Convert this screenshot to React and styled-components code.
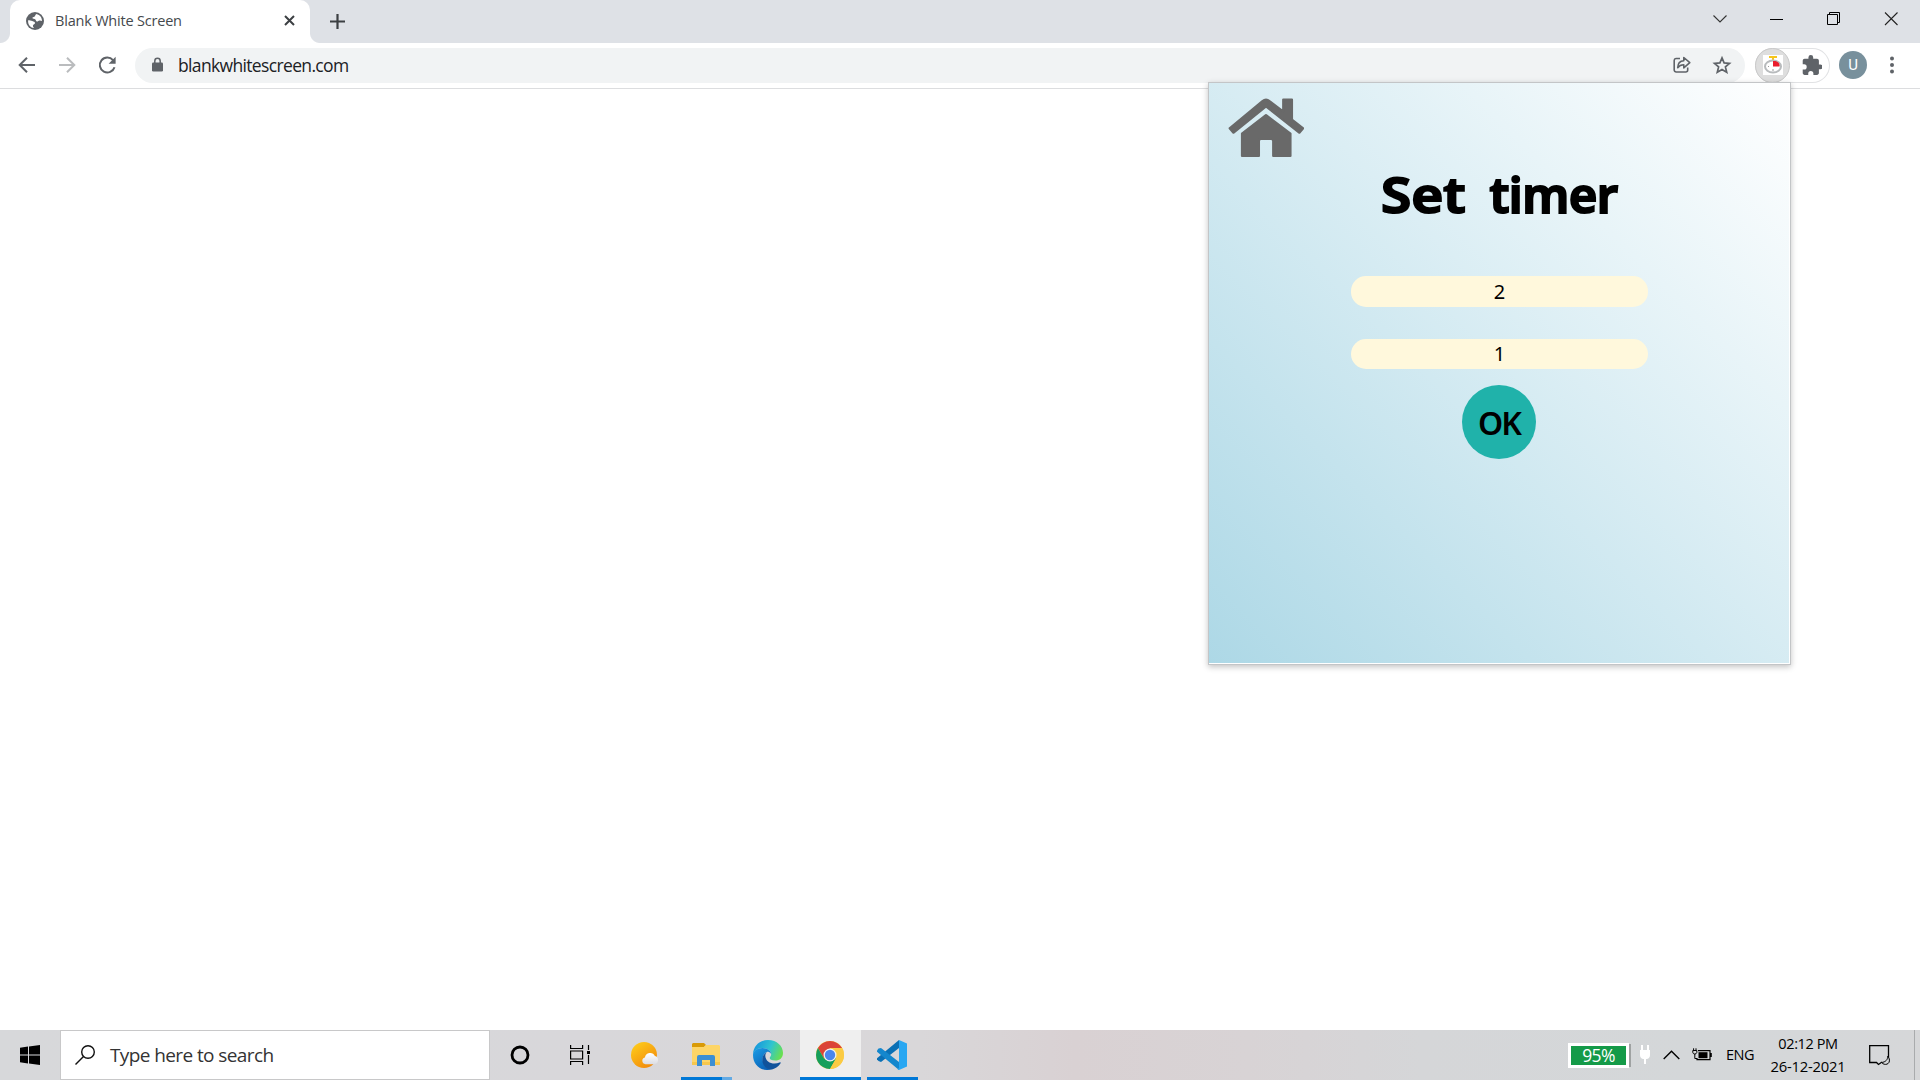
import React from 'react';
import styled, { createGlobalStyle } from 'styled-components';

const Global = createGlobalStyle`
  * { box-sizing: border-box; }
  html, body { margin: 0; background: #fff; overflow: hidden; }
  body { font-family: "Open Sans", "Noto Sans", sans-serif; }
  svg { display: block; flex: none; }
`;

const Screen = styled.div`
  position: relative;
  width: 1920px;
  height: 1080px;
  display: flex;
  flex-direction: column;
  background: #fff;
`;

const TabStrip = styled.header`
  height: 43px;
  flex: none;
  display: flex;
  padding-left: 10px;
  background: #dee1e6;
`;

const Tab = styled.div`
  position: relative;
  width: 300px;
  height: 43px;
  display: flex;
  align-items: center;
  padding: 0 15px 2px 16px;
  border-radius: 10px 10px 0 0;
  background: #fff;
  &::before, &::after {
    content: "";
    position: absolute;
    bottom: 0;
    width: 10px;
    height: 10px;
  }
  &::before { left: -10px; background: radial-gradient(circle at 0 0, transparent 9.5px, #fff 10.5px); }
  &::after { right: -10px; background: radial-gradient(circle at 100% 0, transparent 9.5px, #fff 10.5px); }
`;

const Label = styled.span`
  font-size: ${p => p.$size}px;
  line-height: ${p => p.$line || 20}px;
  letter-spacing: ${p => p.$track || 0}px;
  color: ${p => p.$color || '#000'};
  white-space: nowrap;
`;

const TabTitle = styled(Label)`
  flex: 1;
  margin-left: 11px;
`;

const NewTab = styled.div`
  display: flex;
  align-items: center;
  margin-left: 20px;
  padding-bottom: 1px;
`;

const WindowButtons = styled.div`
  display: flex;
  align-items: center;
  gap: 43px;
  height: 37px;
  margin-left: auto;
  padding-right: 22px;
`;

const Toolbar = styled.nav`
  height: 46px;
  flex: none;
  display: flex;
  align-items: center;
  padding: 0 18px 1px 17px;
  border-bottom: 1px solid #dcdddf;
`;

const NavButtons = styled.div`
  display: flex;
  gap: 20px;
  width: 118px;
`;

const Omnibox = styled.div`
  width: 1610px;
  height: 35px;
  display: flex;
  align-items: center;
  padding: 0 13px 0 16px;
  border-radius: 18px;
  background: #f1f3f4;
`;

const Url = styled(Label)`
  flex: 1;
  margin-left: 14px;
`;

const OmniActions = styled.div`
  display: flex;
  gap: 20px;
`;

const Extensions = styled.div`
  width: 75px;
  height: 35px;
  display: flex;
  align-items: center;
  gap: 12px;
  margin-left: 10px;
  border-radius: 18px;
  box-shadow: inset 0 0 0 1px #e1e2e4;
`;

const ActiveExtension = styled.div`
  width: 35px;
  height: 35px;
  display: grid;
  place-items: center;
  border-radius: 50%;
  border: 1px solid #c9c9c9;
  background: #dedede;
`;

const Avatar = styled.div`
  width: 28px;
  height: 28px;
  display: grid;
  place-items: center;
  margin-left: 9px;
  border-radius: 50%;
  background: #78909c;
  color: #fff;
  font: 15px/28px Roboto, sans-serif;
`;

const MenuDots = styled.div`
  display: flex;
  margin-left: 23px;
`;

const Page = styled.main`
  flex: 1;
`;

const Popup = styled.section`
  position: absolute;
  left: 1208px;
  top: 82px;
  width: 583px;
  height: 583px;
  display: flex;
  flex-direction: column;
  align-items: center;
  border: 1px solid #c3c5c7;
  background: linear-gradient(45deg, #add8e6, #fff) 0 0 / 580px 580px no-repeat #fff;
  box-shadow: 0 2px 6px rgba(0, 0, 0, 0.24);
`;

const HomeButton = styled.div`
  align-self: flex-start;
  padding: 15px 0 0 19px;
  height: 76px;
`;

const Title = styled.h1`
  height: 60px;
  display: flex;
  gap: 19px;
  margin: 0 0 57px;
  font: 600 49px/70px "Noto Sans", sans-serif;
  -webkit-text-stroke: 2px #000;
  white-space: nowrap;
`;

const Word = styled.span`
  letter-spacing: ${p => p.$track}px;
  margin-right: ${p => p.$after || 0}px;
  transform: scaleX(${p => p.$stretch || 1});
  transform-origin: left;
`;

const Field = styled.div`
  width: 297px;
  height: ${p => p.$height}px;
  margin-bottom: ${p => p.$gap}px;
  border-radius: 15px;
  background: #fff8dc;
  text-align: center;
  font: 20px/${p => p.$height}px "Noto Sans", sans-serif;
`;

const OkButton = styled.div`
  width: 74px;
  height: 74px;
  margin-right: 1px;
  border-radius: 50%;
  background: #20b2aa;
  text-align: center;
  font: 600 32px/75px "Noto Sans", sans-serif;
  letter-spacing: -2px;
`;

const Taskbar = styled.footer`
  height: 50px;
  flex: none;
  display: flex;
  background: linear-gradient(90deg, #d7d8da 0%, #d8d7da 30%, #d9d7d9 48%, #d9d1d3 56%, #d8d3d5 65%, #d5d6d8 74%, #d4d7d9 88%, #d6d7d9 100%);
`;

const Start = styled.div`
  width: 60px;
  display: grid;
  place-items: center;
`;

const SearchBox = styled.div`
  width: 430px;
  display: flex;
  align-items: center;
  gap: 15px;
  padding-left: 14px;
  border: 1px solid #c8c8c9;
  background: #fff;
`;

const Task = styled.div`
  width: ${p => p.$width}px;
  margin-right: ${p => p.$gap || 0}px;
  padding-right: ${p => p.$nudge || 0}px;
  display: flex;
  align-items: center;
  justify-content: center;
  background: ${p => (p.$active ? '#efefef' : 'transparent')};
  box-shadow: ${p => (p.$open ? 'inset 0 -3px 0 #0078d7' : 'none')};
  border-right: ${p => (p.$stacked ? '10px solid transparent' : '0')};
  border-image: ${p => (p.$stacked ? 'linear-gradient(transparent 47px, #63aae4 47px) 0 10 0 0' : 'none')};
`;

const Tray = styled.div`
  display: flex;
  align-items: center;
  margin-left: auto;
`;

const Battery = styled.div`
  width: 61px;
  height: 25px;
  margin-right: 10px;
  border: 3px solid #fff;
  background: #149a48;
  text-align: center;
  line-height: 18px;
  box-shadow: 3px 0 0 -1px #9fa2a2;
`;

const Clock = styled.div`
  width: 78px;
  display: flex;
  flex-direction: column;
  align-items: center;
  margin: 0 22px 0 15px;
`;

const Spacer = styled.div`
  width: ${p => p.$w}px;
`;

const ShowDesktop = styled.div`
  width: 6px;
  height: 50px;
  margin-left: 24px;
  border-left: 1px solid #a9abad;
`;

const Globe = () => (
  <svg width="18" height="18" viewBox="0 0 18 18">
    <circle cx="9" cy="9" r="9" fill="#5f6368" />
    <path d="M10.5 1.9C9.2 2.3 9.5 4 8.4 4.7c-1 .5-2 .2-2 1.4 0 1 2.2.6 3 1.5.8 1 .3 1.8 1.6 2 1 .1 1.5-1.3 2.8-1.1.9.1 1.8.4 2.2.5.1-3.4-2-6.2-5.5-7.1zM2.1 8.2c1.4.2 3 .1 4.2.9 1.3.8 2.8.8 2.7 2.1-.1 1-1.8 1-2 2-.2.9.2 2 1 2.7C4.8 16 2.100 13 2.100 9.500z" fill="#fff" />
  </svg>
);

const Cross = () => (
  <svg width="11" height="11" viewBox="0 0 11 11"><path d="M1 1l9 9M10 1l-9 9" stroke="#3c4043" strokeWidth="2" /></svg>
);

const Plus = () => (
  <svg width="15" height="15" viewBox="0 0 15 15"><path d="M7.500 0v15M0 7.500h15" stroke="#3c4043" strokeWidth="2.200" /></svg>
);

const Arrow = ({ color, flip }) => (
  <svg width="20" height="20" viewBox="0 0 20 20">
    <path transform={flip ? 'translate(20 0) scale(-1 1)' : undefined} d="M18 10H3.500M10 2.700L2.700 10l7.300 7.300" fill="none" stroke={color} strokeWidth="2" />
  </svg>
);

const Reload = () => (
  <svg width="20" height="20" viewBox="0 0 20 20">
    <path d="M16 5.100A7.500 7.500 0 1 0 17.500 12.200" fill="none" stroke="#5f6368" strokeWidth="2" />
    <path d="M18.600 1.800v7h-7z" fill="#5f6368" />
  </svg>
);

const Lock = () => (
  <svg width="13" height="16" viewBox="0 0 13 16">
    <rect x="1" y="5.500" width="11" height="9" rx="1.300" fill="#5f6368" />
    <path d="M3.800 6V4a2.700 2.700 0 0 1 5.400 0v2" fill="none" stroke="#5f6368" strokeWidth="1.500" />
  </svg>
);

const Share = () => (
  <svg width="20" height="20" viewBox="0 0 20 20" fill="none" stroke="#5f6368" strokeWidth="1.600">
    <path d="M8 3.500H4A2 2 0 0 0 2.200 5.500v9.500a2 2 0 0 0 2 2h9.500a2 2 0 0 0 2-2v-2.500" />
    <path d="M11.800 2.500v3.300C7.500 6 5.800 9 5.700 12.800c1.500-2.300 3.300-3.100 6.100-3.100v3.200l6-5.200z" strokeLinejoin="round" />
  </svg>
);

const Star = () => (
  <svg width="20" height="20" viewBox="0 0 20 20">
    <path d="M10 2.900l2.100 5 5.400.5-4.100 3.500 1.300 5.300-4.700-2.800-4.700 2.800 1.300-5.300-4.100-3.500 5.400-.5z" fill="none" stroke="#5f6368" strokeWidth="1.700" />
  </svg>
);

const TimerIcon = () => (
  <svg width="20" height="20" viewBox="0 0 20 20">
    <rect width="20" height="20" fill="#fff" />
    <path d="M6 1h8v2H11v2H9V3H6z" fill="#f6c51c" />
    <ellipse cx="10" cy="11.500" rx="8" ry="6" fill="#fff" stroke="#b8bbbd" strokeWidth="2" />
    <path d="M10 6h2.500a6 5 0 0 1 4 5.500H10z" fill="#ea1c2c" />
    <path d="M10 14v2M5 11.500h1" stroke="#999" strokeWidth="1" />
  </svg>
);

const Puzzle = () => (
  <svg width="20" height="20" viewBox="1.500 1 20.500 21">
    <path d="M20.500 11H19V7c0-1.100-.9-2-2-2h-4V3.500a2.500 2.500 0 0 0-5 0V5H4c-1.100 0-2 .9-2 2v3.800h1.500a2.700 2.700 0 0 1 0 5.400H2V20c0 1.100.9 2 2 2h3.800v-1.500a2.700 2.700 0 0 1 5.400 0V22H17c1.100 0 2-.9 2-2v-4h1.500a2.500 2.500 0 0 0 0-5z" fill="#5f6368" />
  </svg>
);

const House = () => (
  <svg width="76" height="60" viewBox="1224.500 98 66 60" preserveAspectRatio="none" fill="#696969" stroke="#696969" strokeWidth="2" strokeLinejoin="round">
    <path d="M1226 128.300L1254.500 101q3-3 6 0L1272.500 111.500V99.500h7.500V119.500L1289.700 128.300 1286.400 132.800 1257.500 106.500 1229.300 132.800z" />
    <path d="M1257.500 115L1236.700 133.500V156H1251.300V141q0-2 2-2h8.500q2 0 2 2V156H1278.700V133.500z" />
  </svg>
);

const Windows = () => (
  <svg width="20" height="20" viewBox="0 0 20 20">
    <path d="M0 2.800L8 1.600V9.400H0zM9 1.500L20 0V9.400H9zM0 10.400H8V18.400L0 17.300zM9 10.400H20V20L9 18.600z" />
  </svg>
);

const Magnifier = () => (
  <svg width="20" height="20" viewBox="0 0 20 20" fill="none" stroke="#111" strokeWidth="1.400">
    <circle cx="13" cy="7" r="6.300" /><path d="M8.500 11.500L.5 19.500" />
  </svg>
);

const TaskView = () => (
  <svg width="20" height="20" viewBox="0 0 20 20" fill="none" stroke="#000" strokeWidth="1.200">
    <path d="M.6 0v3.500h12V0M.6 20v-3.500h12V20M.6 6h12v8H.6zM18.500 0v5M18.500 10v9" />
    <path d="M17 6h3v3h-3z" fill="#000" stroke="none" />
  </svg>
);

const Weather = () => (
  <svg width="28" height="28" viewBox="0 0 28 28">
    <defs>
      <linearGradient id="sun" x1="0" y1="0" x2=".7" y2="1"><stop offset="0" stopColor="#ffd21c" /><stop offset="1" stopColor="#f28a0c" /></linearGradient>
      <linearGradient id="cloud" x1="0" y1="0" x2="0" y2="1"><stop offset="0" stopColor="#fff" /><stop offset="1" stopColor="#dcdde3" /></linearGradient>
    </defs>
    <circle cx="13" cy="14" r="13" fill="url(#sun)" />
    <path d="M14.500 23.200a3.400 3.400 0 0 1-.6-6.700 5.300 5.300 0 0 1 10-1.500 4.200 4.200 0 0 1-.4 8.200z" fill="url(#cloud)" />
  </svg>
);

const Folder = () => (
  <svg width="28" height="24" viewBox="0 0 28 24">
    <path d="M1 0h11l2 2-2 2H0V1z" fill="#d99a06" />
    <path d="M0 4h12l2-2h13l1 1v19H0z" fill="#fdd567" />
    <path d="M0 19h28v3H0z" fill="#f6c74d" />
    <path d="M7 12h14q2 0 2 2v9h-5v-6h-8v6H5v-9q0-2 2-2z" fill="#3c8fd3" />
  </svg>
);

const Edge = () => (
  <svg width="30" height="30" viewBox="0 0 30 30">
    <defs>
      <linearGradient id="edgeTop" x1="0" y1=".3" x2="1" y2=".6"><stop offset="0" stopColor="#1594de" /><stop offset=".55" stopColor="#30c4d0" /><stop offset="1" stopColor="#6ae04e" /></linearGradient>
      <linearGradient id="edgeLeft" x1="0" y1="0" x2=".6" y2="1"><stop offset="0" stopColor="#1c9de5" /><stop offset="1" stopColor="#0a62b8" /></linearGradient>
    </defs>
    <path d="M0 14C.5 5.500 7 0 15 0c9 0 15 6 15 13 0 5-3.500 7.500-7.500 7.500-4 0-5.800-1.300-5.800-2.500 0-1 1.500-1.500 1.500-4C18.200 11 14 8 9.500 8 4.500 8 1 11 0 14z" fill="url(#edgeTop)" />
    <path d="M0 15C0 11 4 8 9.500 8c4.500 0 8.700 3 8.700 6-.8-1.700-2.400-2.200-4-2.200-3.500 1.500-5 5-4.500 8.700.5 4.500 4 8 8.800 9C8 32 0 25 0 15z" fill="url(#edgeLeft)" />
    <path d="M14 12C9 14.500 8 20.500 11 25.500c2 3 5 4.500 8 4 3.500-.8 6.500-3 8.600-6.200.4-.8-.2-1.200-1-.8C20 25.500 12.500 22 12.300 16c0-2 .7-3 1.700-4z" fill="#10529b" />
  </svg>
);

const Chrome = () => (
  <svg width="28" height="28" viewBox="0 0 28 28">
    <circle cx="14" cy="14" r="14" fill="#fbcb43" />
    <path d="M1.900 7A14 14 0 0 1 26.100 7H14L8 17.500z" fill="#db4437" />
    <path d="M1.900 7A14 14 0 0 0 14 28L20 17.500 8 17.500z" fill="#159f5c" />
    <path d="M14 28L20.100 17.500 14 7H26.100A14 14 0 0 1 14 28z" fill="#fbcb43" />
    <circle cx="14" cy="14" r="6.500" fill="#f1f1f1" /><circle cx="14" cy="14" r="5.200" fill="#4a86ee" />
  </svg>
);

const Code = () => (
  <svg width="30" height="30" viewBox="0 0 30 30">
    <path d="M22 0v8L4 22 1.500 21 0 19.500v-1.200z" fill="#0a70b5" />
    <path d="M22 30v-8L4 8 1.500 8.500 0 10.500v1.200z" fill="#1487cd" />
    <path d="M22 0l8 3.500v23L22 30l-1.500-.7L22 28z" fill="#29a7f2" />
  </svg>
);

const Plug = () => (
  <svg width="12" height="20" viewBox="0 0 12 20"><path d="M2 0h2v5h4V0h2v5h1v5q0 3-3 4H7v5H5v-5H4q-3-1-3-4V5h1z" fill="#fff" /></svg>
);

const ChargingBattery = () => (
  <svg width="20" height="14" viewBox="0 0 20 14">
    <path d="M6 2.600h12v9H5V10M19.200 5v4" fill="none" stroke="#000" strokeWidth="1.200" />
    <path d="M6.500 4.200h9v6h-9V6z" />
    <path d="M.8 2.500h4v2q-.4 1.400-2 1.600Q1.100 5.900.8 4.500zM1.600.3v2M4 .3v2M2.800 6v4.500H5" fill="none" stroke="#000" strokeWidth="1" />
  </svg>
);

const ActionCenter = () => (
  <svg width="21" height="21" viewBox="0 0 21 21">
    <path d="M13 17L9.500 19.500 7.500 17.500H.7V.7h18.800V13" fill="none" stroke="#000" strokeWidth="1.300" />
    <path d="M18.500 11.500c.5 3-2 5.700-6 6 3 3.500 9 2 7.800-3.500-.2-1-.9-2-1.800-2.500z" fill="#d5d7d9" stroke="#000" />
  </svg>
);

export default function App() {
  return (
    <Screen>
      <Global />
      <TabStrip>
        <Tab>
          <Globe />
          <TabTitle $size={14.5} $track={-0.2} $color="#45494d">Blank White Screen</TabTitle>
          <Cross />
        </Tab>
        <NewTab><Plus /></NewTab>
        <WindowButtons>
          <svg width="14" height="14" viewBox="0 0 14 14"><path d="M.5 3.500L7 10l6.500-6.500" fill="none" stroke="#333" strokeWidth="1.100" /></svg>
          <svg width="14" height="14" viewBox="0 0 14 14"><path d="M0 7.500h13" stroke="#000" /></svg>
          <svg width="14" height="14" viewBox="0 0 14 14"><path d="M.5 2.500h10v10H.5zM2.500 2.500v-2h10v10h-2" fill="none" stroke="#000" /></svg>
          <svg width="14" height="14" viewBox="0 0 14 14"><path d="M1 .5l12.500 12.500M13.500 .5L1 13" stroke="#222" strokeWidth="1.100" /></svg>
        </WindowButtons>
      </TabStrip>
      <Toolbar>
        <NavButtons>
          <Arrow color="#5f6368" />
          <Arrow color="#babcbe" flip />
          <Reload />
        </NavButtons>
        <Omnibox>
          <Lock />
          <Url $size={17.5} $track={-0.65} $line={24} $color="#202124">blankwhitescreen.com</Url>
          <OmniActions><Share /><Star /></OmniActions>
        </Omnibox>
        <Extensions>
          <ActiveExtension><TimerIcon /></ActiveExtension>
          <Puzzle />
        </Extensions>
        <Avatar>U</Avatar>
        <MenuDots>
          <svg width="4" height="18" viewBox="0 0 4 18" fill="#5f6368"><circle cx="2" cy="2.500" r="2" /><circle cx="2" cy="9" r="2" /><circle cx="2" cy="15.500" r="2" /></svg>
        </MenuDots>
      </Toolbar>
      <Page />
      <Popup>
        <HomeButton><House /></HomeButton>
        <Title><Word $track={0} $stretch={1.12} $after={13.5}>Set</Word><Word $track={-0.5}>timer</Word></Title>
        <Field $height={31} $gap={32}>2</Field>
        <Field $height={30} $gap={16}>1</Field>
        <OkButton>OK</OkButton>
      </Popup>
      <Taskbar>
        <Start><Windows /></Start>
        <SearchBox>
          <Magnifier />
          <Label $size={19} $track={-0.6} $line={26} $color="#333">Type here to search</Label>
        </SearchBox>
        <Task $width={60}>
          <svg width="20" height="20" viewBox="0 0 20 20"><circle cx="10" cy="10" r="8" fill="none" stroke="#000" strokeWidth="2.800" /></svg>
        </Task>
        <Task $width={60}><TaskView /></Task>
        <Task $width={71} $nudge={2}><Weather /></Task>
        <Task $width={51} $gap={5} $nudge={2} $open $stacked><Spacer $w={10} /><Folder /></Task>
        <Task $width={63} $nudge={2}><Edge /></Task>
        <Task $width={61} $gap={6} $nudge={2} $open $active><Chrome /></Task>
        <Task $width={51} $nudge={1} $open><Code /></Task>
        <Tray>
          <Battery><Label $size={17.5} $track={-0.6} $line={18} $color="#fff">95%</Label></Battery>
          <Plug />
          <Spacer $w={12} />
          <svg width="17" height="10" viewBox="0 0 17 10"><path d="M.7 9L8.500 1.200 16.300 9" fill="none" stroke="#000" strokeWidth="1.400" /></svg>
          <Spacer $w={12} />
          <ChargingBattery />
          <Spacer $w={14} />
          <Label $size={14.5} $track={-0.5}>ENG</Label>
          <Clock>
            <Label $size={14.5} $track={-0.4} $line={23}>02:12 PM</Label>
            <Label $size={14.8} $track={-0.2} $line={23}>26-12-2021</Label>
          </Clock>
          <ActionCenter />
          <ShowDesktop />
        </Tray>
      </Taskbar>
    </Screen>
  );
}
